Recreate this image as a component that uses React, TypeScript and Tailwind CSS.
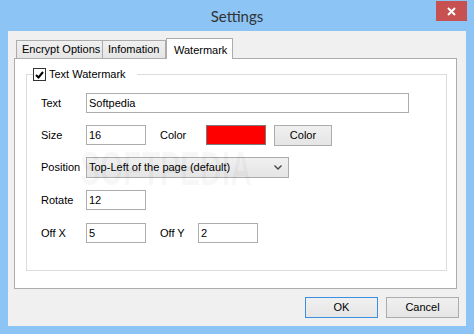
import React from 'react';

const font = { fontFamily: '"Liberation Sans", Arial, sans-serif' };

function TextBox({ value, width }: { value: string; width: string }) {
  return (
    <div className={`${width} h-[20px] border border-[#acacac] bg-white pl-[2px] flex items-center text-[11px] text-black`}>
      {value}
    </div>
  );
}

function Label({ children, width }: { children: React.ReactNode; width: string }) {
  return <div className={`${width} shrink-0 text-[11px] text-black`}>{children}</div>;
}

function Button({ children, primary, width }: { children: React.ReactNode; primary?: boolean; width: string }) {
  return (
    <div
      className={`${width} h-[21px] flex items-center justify-center text-[11px] text-black bg-gradient-to-b from-[#f0f0f0] to-[#e5e5e5] border ${
        primary ? 'border-[#3c8ee0]' : 'border-[#acacac]'
      }`}
    >
      {children}
    </div>
  );
}

export default function App() {
  return (
    <div className="w-[474px] h-[334px] bg-[#8bc4f5] flex flex-col overflow-hidden" style={font}>
      {/* Title bar */}
      <div className="flex h-[31px] shrink-0">
        <div className="w-[38px]" />
        <div
          className="flex-1 text-center pt-[5px] text-[15px] text-[#333]"
          style={{ fontFamily: 'Lato, "Liberation Sans", sans-serif' }}
        >
          Settings
        </div>
        <div className="pt-[1px] pr-[7px]">
          <div className="w-[31px] h-[20px] bg-[#c75050] flex items-center justify-center">
            <svg width="9" height="9" viewBox="0 0 9 9">
              <path d="M1 1 L8 8 M8 1 L1 8" stroke="#fff" strokeWidth="2" />
            </svg>
          </div>
        </div>
      </div>

      {/* Client area */}
      <div className="mx-[8px] h-[295px] bg-[#f0f0f0] pl-[6px] pt-[7px] relative">
        {/* Tabs */}
        <div className="flex items-end h-[20px] ml-[2px]">
          <div className="w-[87px] h-[18px] border border-b-0 border-[#acacac] bg-gradient-to-b from-[#f0f0f0] to-[#e5e5e5] text-[11px] text-black pl-[5px] flex items-center whitespace-nowrap">
            Encrypt Options
          </div>
          <div className="w-[63px] h-[18px] border border-b-0 border-l-0 border-[#acacac] bg-gradient-to-b from-[#f0f0f0] to-[#e5e5e5] text-[11px] text-black pl-[5px] flex items-center">
            Infomation
          </div>
          <div className="relative z-10 w-[67px] h-[21px] -mb-[1px] border border-b-0 border-[#acacac] bg-white text-[11px] text-black pl-[7px] pt-[3px]">
            Watermark
          </div>
        </div>

        {/* Tab panel */}
        <div className="w-[443px] h-[231px] border border-[#acacac] bg-white pl-[11px] pt-[15px]">
          <div className="w-[421px] h-[197px] border border-[#dcdcdc] pl-[14px]">
            {/* Group header */}
            <div className="-mt-[7px] -ml-[8px] flex items-center h-[13px] w-fit bg-white pr-[11px]">
              <div className="w-[13px] h-[13px] border border-[#333] bg-white flex items-center justify-center">
                <svg width="9" height="8" viewBox="0 0 9 8">
                  <path d="M1 4 L3.5 6.5 L8 1" stroke="#000" strokeWidth="2" fill="none" />
                </svg>
              </div>
              <span className="ml-[3px] text-[11px] text-black">Text Watermark</span>
            </div>

            <div className="mt-[12px] flex items-center h-[20px]">
              <Label width="w-[45px]">Text</Label>
              <TextBox value="Softpedia" width="w-[323px]" />
            </div>

            <div className="mt-[12px] flex items-center h-[20px]">
              <Label width="w-[45px]">Size</Label>
              <TextBox value="16" width="w-[60px]" />
              <div className="w-[14px]" />
              <Label width="w-[46px]">Color</Label>
              <div className="w-[60px] h-[20px] border border-[#7a7a7a] bg-[#ff0000]" />
              <div className="w-[8px]" />
              <Button width="w-[58px]">Color</Button>
            </div>

            <div className="mt-[12px] flex items-center h-[21px]">
              <Label width="w-[45px]">Position</Label>
              <div className="w-[203px] h-[21px] border border-[#acacac] bg-gradient-to-b from-[#f0f0f0] to-[#e5e5e5] pl-[2px] pr-[6px] flex items-center justify-between text-[11px] text-black">
                <span>Top-Left of the page (default)</span>
                <svg width="8" height="5" viewBox="0 0 8 5">
                  <path d="M0.5 0.5 L4 4 L7.5 0.5" stroke="#444" strokeWidth="1.4" fill="none" />
                </svg>
              </div>
            </div>

            <div className="mt-[12px] flex items-center h-[20px]">
              <Label width="w-[45px]">Rotate</Label>
              <TextBox value="12" width="w-[60px]" />
            </div>

            <div className="mt-[13px] flex items-center h-[20px]">
              <Label width="w-[45px]">Off X</Label>
              <TextBox value="5" width="w-[60px]" />
              <div className="w-[14px]" />
              <Label width="w-[38px]">Off Y</Label>
              <TextBox value="2" width="w-[60px]" />
            </div>
          </div>
        </div>

        {/* Faint watermark overlay */}
        <div className="absolute left-[72px] top-[114px] pointer-events-none origin-top scale-y-[1.6] text-[30px] font-bold text-black/[0.04] leading-none whitespace-nowrap">
          SOFTPEDIA<span className="text-[8px] align-top">®</span>
        </div>

        {/* Dialog buttons */}
        <div className="mt-[8px] flex justify-end gap-[8px] pr-[7px]">
          <Button primary width="w-[73px]">OK</Button>
          <Button width="w-[73px]">Cancel</Button>
        </div>
      </div>
    </div>
  );
}
